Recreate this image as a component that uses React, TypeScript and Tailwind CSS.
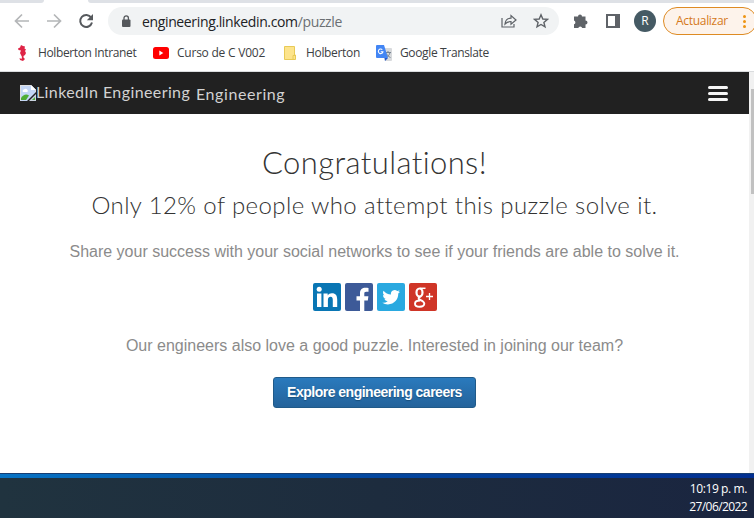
import React from "react";

const ui = "font-['Open_Sans','Noto_Sans',sans-serif] whitespace-nowrap";
const display = "font-['Lato',sans-serif] whitespace-nowrap";
const body = "font-['Liberation_Sans',Arial,sans-serif] whitespace-nowrap";

function Toolbar() {
  return (
    <div className="flex h-[35px] items-center bg-white pt-px">
      <svg className="ml-[14px] h-4 w-4 shrink-0" viewBox="0 0 16 16" fill="none" stroke="#b4b6b8" strokeWidth="1.7">
        <path d="M15 8H2M8 1.5 1.5 8 8 14.5" />
      </svg>
      <svg className="ml-4 h-4 w-4 shrink-0" viewBox="0 0 16 16" fill="none" stroke="#b4b6b8" strokeWidth="1.7">
        <path d="M1 8h13M8 1.5 14.5 8 8 14.5" />
      </svg>
      <svg className="ml-[16px] h-4 w-4 shrink-0" viewBox="0 0 16 16" fill="none" stroke="#56595d" strokeWidth="2">
        <path d="M13.2 4.6A6 6 0 1 0 14 9.6" />
        <path d="M15 1v6.2H8.8z" fill="#56595d" stroke="none" />
      </svg>
      <div className="ml-[14px] flex h-7 w-[451px] shrink-0 items-center rounded-full bg-[#f1f3f4]">
        <svg className="ml-[13px] h-3 w-[10px] shrink-0" viewBox="0 0 10 12">
          <rect x="1" y="4.5" width="8.5" height="7.5" rx="1" fill="#55585c" />
          <path d="M3 5V3a2.2 2.2 0 0 1 4.4 0v2" fill="none" stroke="#55585c" strokeWidth="1.3" />
        </svg>
        <span className={`${ui} ml-[11px] w-[359px] shrink-0 text-[14px] tracking-[-0.36px] text-[#202124]`}>
          engineering.linkedin.com<span className="text-[#6b6f73]">/puzzle</span>
        </span>
        <svg className="h-4 w-4 shrink-0" viewBox="0 0 16 16" fill="none" stroke="#5f6368" strokeWidth="1.2">
          <path d="M1 5v9h12v-3M4 11c.4-4 2.800-5.800 6-5.800V2.500L15 7l-5 4.200V8.500C7.500 8.500 5.500 9.300 4 11z" />
        </svg>
        <svg className="ml-4 h-4 w-4 shrink-0" viewBox="0 0 16 16" fill="none" stroke="#5f6368" strokeWidth="1.4">
          <path d="m8 1.800 1.800 4.200 4.600.4-3.500 3 1.100 4.500-4-2.400-4 2.400 1.100-4.500-3.500-3 4.600-.4z" />
        </svg>
      </div>
      <svg className="ml-[14px] h-4 w-4 shrink-0" viewBox="0 0 16 16" fill="#5f6368">
        <path d="M1 3.500h4a2 2 0 1 1 4 0h3.500v4a2 2 0 1 1 0 4V15H9.200a2 2 0 0 0-3.900 0H1v-3.700a2 2 0 0 0 0-3.800z" />
      </svg>
      <div className="ml-[17px] h-[14px] w-[14px] shrink-0 border-2 border-r-[5px] border-[#5f6368]" />
      <div className={`${ui} ml-[14px] flex h-[22px] w-[22px] shrink-0 items-center justify-center rounded-full bg-[#455a64] text-[12px] text-white`}>
        R
      </div>
      <div className="ml-[7px] flex h-7 w-[94px] shrink-0 items-center rounded-full border border-[#de8b23] bg-[#fdf3eb]">
        <span className={`${ui} ml-[12px] w-[67px] text-[12px] tracking-[-0.3px] text-[#d5791a]`}>Actualizar</span>
        <span className="flex flex-col gap-[2px]">
          <i className="h-[3px] w-[3px] rounded-full bg-[#ee9412]" />
          <i className="h-[3px] w-[3px] rounded-full bg-[#ee9412]" />
          <i className="h-[3px] w-[3px] rounded-full bg-[#ee9412]" />
        </span>
      </div>
    </div>
  );
}

function Bookmarks() {
  return (
    <div className={`${ui} flex h-[34px] items-center border-b border-[#dadcde] bg-white pb-[3px] text-[12px] text-[#3c4043]`}>
      <svg className="ml-[18px] h-4 w-[9px] shrink-0" viewBox="0 0 9 16" fill="#df2446">
        <path d="m3 0 2 1 2 .5-.5 2L8 4.500 7 6l1 2-1 2-1.500 1v1.500L7 14l-2 2-3-1-.5-2 2 1 .5-2-1-2-1-2 1-2.500-2.500-.5L0 3.500l2-1z" />
      </svg>
      <span className="ml-[11px] w-[115px] tracking-[-0.37px]">Holberton Intranet</span>
      <svg className="h-[12px] w-4 shrink-0" viewBox="0 0 16 12">
        <rect width="16" height="12" rx="2.500" fill="#f00" />
        <path d="m6.300 3.500 4 2.500-4 2.500z" fill="#fff" />
      </svg>
      <span className="ml-2 w-[107px] tracking-[-0.23px]">Curso de C V002</span>
      <svg className="h-[14px] w-3 shrink-0" viewBox="0 0 12 14">
        <path d="M.5.500h10V9h1v4.500H.5z" fill="#fde48c" stroke="#e8ca57" />
        <path d="M9 13V9.500h2" fill="none" stroke="#e8ca57" />
      </svg>
      <span className="ml-[10px] w-[70px] tracking-[-0.33px]">Holberton</span>
      <svg className="h-4 w-4 shrink-0" viewBox="0 0 16 16">
        <path d="M6 3h9a1 1 0 0 1 1 1v11a1 1 0 0 1-1 1H9z" fill="#d8dadd" />
        <path d="M9 7.500h6M12 6v1.500M14 7.500c-.5 2.500-2 4-4 5M10.500 8.500c.8 2 2 3 4 4" fill="none" stroke="#778492" />
        <path d="M1 0h7l4 13H1a1 1 0 0 1-1-1V1a1 1 0 0 1 1-1z" fill="#4285f4" />
        <path d="M8.500 13H12l-3 3z" fill="#2458c7" />
        <path d="M6.300 4.700a2.300 2.300 0 1 0 .6 2.100H4.700" fill="none" stroke="#fff" strokeWidth="1.100" />
      </svg>
      <span className="ml-2 tracking-[-0.35px]">Google Translate</span>
    </div>
  );
}

function BrokenImage() {
  return (
    <svg className="h-4 w-4 shrink-0" viewBox="0 0 16 16">
      <path d="M0 0h11l5 5v2L7 16H0z" fill="#c3d6f5" />
      <path d="M.5 15.500V.500H11L15.500 5v2" fill="none" stroke="#dedede" />
      <path d="M11 0v5h5z" fill="#fff" />
      <path d="M3 7a1.500 1.500 0 0 1 1-2.500 2 2 0 0 1 3.500.5A1.200 1.200 0 0 1 7 7z" fill="#fff" />
      <path d="M1 15v-2c2-3 5-4.500 8-2.500L6 15z" fill="#4fad35" />
      <path d="m16 9-7 7h7z" fill="#c8d2df" />
      <path d="m12 15 3-3v3z" fill="#4fad35" />
    </svg>
  );
}

function SiteHeader() {
  return (
    <header className={`${display} flex h-[42px] items-center bg-[#212121] text-[16px] text-[#d2d2d2]`}>
      <div className="ml-5 flex w-44 items-center">
        <BrokenImage />
        <span className="pb-[2px] tracking-[0.4px]">LinkedIn Engineering</span>
      </div>
      <span className="pt-[2px] tracking-[0.58px]">Engineering</span>
      <div className="mr-[21px] ml-auto flex flex-col gap-[3px]">
        <i className="h-[3px] w-5 rounded-sm bg-[#f5f5f5]" />
        <i className="h-[3px] w-5 rounded-sm bg-[#f5f5f5]" />
        <i className="h-[3px] w-5 rounded-sm bg-[#f5f5f5]" />
      </div>
    </header>
  );
}

function Social() {
  return (
    <div className="mt-[21px] flex gap-1">
      <svg className="h-7 w-7" viewBox="0 0 28 28">
        <rect width="28" height="28" rx="2" fill="#0976b4" />
        <g fill="#fff">
          <circle cx="6.200" cy="6.300" r="2.500" />
          <path d="M4 10.500h4.400V24H4zM10.500 10.500h4.200v1.900c.9-1.400 2.300-2.200 4.200-2.200 4 0 5.300 2.400 5.300 6.300V24h-4.400v-6.700c0-2-.4-3.500-2.200-3.500-2 0-2.700 1.400-2.700 3.400V24h-4.400z" />
        </g>
      </svg>
      <svg className="h-7 w-7" viewBox="0 0 28 28">
        <rect width="28" height="28" rx="2" fill="#3d5a98" />
        <path d="M15 28V17.500h-3.500v-4.300H15v-3c0-3.700 2.200-5.500 5.500-5.500 1.300 0 2.500.1 3 .2v3.900h-2.300c-1.700 0-1.900.8-1.900 2.200v2.200h4.100l-.6 4.300h-3.500V28z" fill="#fff" />
      </svg>
      <svg className="h-7 w-7" viewBox="0 0 28 28">
        <rect width="28" height="28" rx="2" fill="#2aa9e0" />
        <path transform="translate(5.300 5.300) scale(.74)" d="M23.950 4.570a10 10 0 0 1-2.820.770 4.960 4.960 0 0 0 2.160-2.720c-.95.550-2 .950-3.130 1.180a4.920 4.920 0 0 0-8.380 4.480C7.690 8.090 4.070 6.130 1.640 3.160a4.820 4.820 0 0 0-.67 2.470c0 1.710.87 3.210 2.190 4.100a4.900 4.900 0 0 1-2.230-.61v.06a4.920 4.920 0 0 0 3.950 4.830 5 5 0 0 1-2.210.08 4.940 4.940 0 0 0 4.600 3.420A9.870 9.870 0 0 1 0 19.540a13.990 13.990 0 0 0 7.550 2.210c9.050 0 14-7.500 14-13.980 0-.21 0-.42-.02-.63a9.930 9.930 0 0 0 2.420-2.570z" fill="#fff" />
      </svg>
      <svg className="h-7 w-7" viewBox="0 0 28 28" fill="none" stroke="#fff">
        <rect width="28" height="28" rx="2" fill="#cf3527" stroke="none" />
        <ellipse cx="10.500" cy="9.500" rx="3" ry="4" strokeWidth="2.200" />
        <path d="M11 5.300h5.500" strokeWidth="1.500" />
        <path d="M11.500 13.500c-2.500 1-2.500 2.200-.5 3.200 2.500 1.200 4.300 2 4.300 3.900 0 2.200-2.100 3.200-4.700 3.200S6 22.800 6 20.700c0-1.900 2-3.200 5.200-3.200" strokeWidth="1.900" />
        <path d="M17 13.500h7M20.500 10v7" strokeWidth="1.300" />
      </svg>
    </div>
  );
}

export default function App() {
  return (
    <div className="flex h-[518px] w-[754px] flex-col overflow-hidden bg-white">
      <div className="flex h-[3px] bg-white">
        <div className="h-full w-[44px] rounded-br-sm bg-[#dee1e6]" />
        <div className="ml-[44px] h-full flex-1 rounded-bl-sm bg-[#dee1e6]" />
      </div>
      <Toolbar />
      <Bookmarks />
      <div className="flex h-[401px]">
        <div className="flex w-[749px] flex-col">
          <SiteHeader />
          <main className="flex flex-1 flex-col items-center bg-white">
            <h1 className={`${display} mt-[29px] text-[31px] leading-[38px] font-light tracking-[0.4px] text-[#333]`}>Congratulations!</h1>
            <h2 className={`${display} mt-[8px] text-[24px] leading-[32px] font-light tracking-[0.4px] text-[#333]`}>
              Only 12% of people who attempt this puzzle solve it.
            </h2>
            <p className={`${body} mt-[21px] text-[16px] leading-5 text-[#8b8b8b]`}>
              Share your success with your social networks to see if your friends are able to solve it.
            </p>
            <Social />
            <p className={`${body} mt-[25px] text-[16px] leading-5 text-[#8b8b8b]`}>
              Our engineers also love a good puzzle. Interested in joining our team?
            </p>
            <button
              className={`${body} mt-[21px] h-[31px] w-[203px] rounded-[3px] border border-[#205a89] bg-linear-to-b from-[#2a7abd] to-[#24639b] text-[14px] font-bold tracking-[-0.5px] text-white text-shadow-[0_1px_1px_#174f7d]`}
            >
              Explore engineering careers
            </button>
          </main>
        </div>
        <div className="w-[5px] bg-[#f1f1f1] pt-[17px] pl-[2px]">
          <div className="h-[105px] bg-[#c1c1c1]" />
        </div>
      </div>
      <div className="h-[5px] border-t border-[#173e73] bg-linear-to-r from-[#0873c4] via-[#04479f] to-[#022f91]" />
      <footer className={`${ui} flex h-10 flex-col items-end bg-linear-to-r from-[#20333f] via-[#1d2c3e] to-[#1a2540] pt-[2px] pr-[7px] text-[12px] leading-[18px] text-white`}>
        <span className="tracking-[-0.4px]">10:19 p. m.</span>
        <span className="tracking-[-0.6px]">27/06/2022</span>
      </footer>
    </div>
  );
}
